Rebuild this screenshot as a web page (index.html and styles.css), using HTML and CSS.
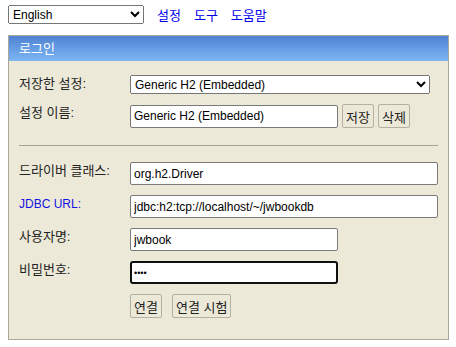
FILE: index.html
```html
<!DOCTYPE html>
<html lang="ko">
<head>
  <meta charset="UTF-8">
  <title>H2 Console</title>
  <link rel="stylesheet" href="styles.css">
</head>
<body>

  <div class="toolbar">
    <select class="lang">
      <option>English</option>
    </select>
    <a href="#">설정</a>
    <a href="#">도구</a>
    <a href="#">도움말</a>
  </div>

  <div class="login">
    <div class="login-title">로그인</div>

    <form class="login-form">
      <label>저장한 설정:</label>
      <select class="field-setting">
        <option>Generic H2 (Embedded)</option>
      </select>

      <label>설정 이름:</label>
      <div class="field-row">
        <input type="text" class="field-short" value="Generic H2 (Embedded)">
        <button type="button" class="btn">저장</button>
        <button type="button" class="btn">삭제</button>
      </div>

      <hr class="divider">

      <label>드라이버 클래스:</label>
      <input type="text" class="field-long" value="org.h2.Driver">

      <label><a href="#" class="help-link">JDBC URL:</a></label>
      <input type="text" class="field-long" value="jdbc:h2:tcp://localhost/~/jwbookdb">

      <label>사용자명:</label>
      <input type="text" class="field-short" value="jwbook">

      <label>비밀번호:</label>
      <input type="password" class="field-short field-focus" value="1234" autofocus>

      <span></span>
      <div class="actions">
        <button type="button" class="btn">연결</button>
        <button type="button" class="btn">연결 시험</button>
      </div>
    </form>
  </div>

</body>
</html>
```

FILE: styles.css
```css
body {
  font-family: "Liberation Sans", "Noto Sans CJK KR", sans-serif;
  font-size: 12px;
  color: #1a1a1a;
  background-color: #fff;
  margin: 0;
  padding: 5px 8px 0;
}

a {
  color: #0000ee;
  text-decoration: none;
}

.toolbar {
  display: flex;
  align-items: center;
  gap: 13px;
  height: 19px;
}

.toolbar a {
  font-size: 13px;
}

select, input, button {
  font-family: "Liberation Sans", "Noto Sans CJK KR", sans-serif;
  font-size: 12px;
  box-sizing: border-box;
  color: #000;
}

.lang {
  width: 136px;
  height: 19px;
}

.login {
  margin-top: 11px;
  width: 441px;
  box-sizing: border-box;
  border: 1px solid #aca899;
  background-color: #ece9d8;
}

.login-title {
  height: 25px;
  line-height: 25px;
  padding: 0 10px;
  color: #fff;
  font-size: 13px;
  background: linear-gradient(#4f82d2, #7db7f4);
}

.login-form {
  display: grid;
  grid-template-columns: 111px 1fr;
  row-gap: 10px;
  align-items: start;
  padding: 14px 10px 21px;
}

.login-form label {
  font-size: 13px;
  line-height: 16px;
  padding-top: 1px;
  color: #222;
}

.help-link {
  font-size: 12px;
  color: #1414e0;
}

.field-setting {
  width: 300px;
  height: 19px;
}

input[type="text"], input[type="password"] {
  height: 23px;
  padding: 1px 3px;
  border: 1px solid #7a7a7a;
  border-radius: 2px;
  background-color: #fff;
}

.field-short {
  width: 208px;
}

.field-long {
  width: 308px;
}

.field-focus,
.field-focus:focus {
  border: 2px solid #101010;
  border-radius: 3px;
  outline: none;
  padding: 0 2px;
  font-size: 9px;
  caret-color: #000;
}

.field-row {
  display: flex;
  align-items: center;
  gap: 4px;
}

.divider {
  grid-column: 1 / -1;
  margin: 7px 0 6px;
  border: 0;
  border-top: 1px solid #a8a597;
  height: 0;
}

.btn {
  height: 24px;
  padding: 0 3px;
  font-size: 13px;
  background-color: #ece9d8;
  border: 1px solid #b4b1a4;
  border-radius: 2px;
  color: #222;
}

.actions {
  display: flex;
  gap: 10px;
}
```
